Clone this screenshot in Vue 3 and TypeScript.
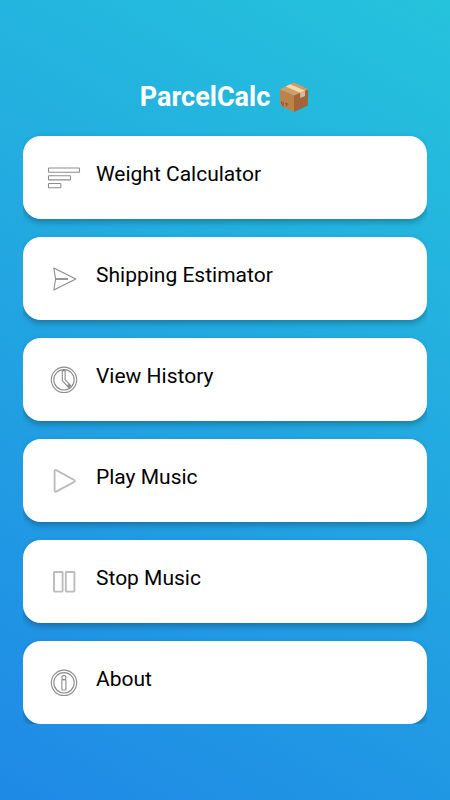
<script setup lang="ts">
type IconName = 'bars' | 'send' | 'clock' | 'play' | 'pause' | 'info'

interface MenuItem {
  label: string
  icon: IconName
}

const items: MenuItem[] = [
  { label: 'Weight Calculator', icon: 'bars' },
  { label: 'Shipping Estimator', icon: 'send' },
  { label: 'View History', icon: 'clock' },
  { label: 'Play Music', icon: 'play' },
  { label: 'Stop Music', icon: 'pause' },
  { label: 'About', icon: 'info' },
]
</script>

<template>
  <main class="screen">
    <h1 class="title">
      <span>ParcelCalc</span>
      <svg class="parcel" viewBox="0 0 32 32" aria-hidden="true">
        <path d="M1.8 8.2 16 14.4V31L2.2 24.4Z" fill="#bd8248" />
        <path d="M30.2 8.2 16 14.4V31l13.8-6.6Z" fill="#a0663a" />
        <path d="M16 1.4 30.2 8.2 16 14.4 1.8 8.2Z" fill="#d29d62" />
        <path d="M12 3.3 7.6 5.4l14.6 6.3 4.8-2Z" fill="#f7d9b0" />
        <path d="m22.2 11.7 4.8-2v5.2l-4.8 2Z" fill="#dbb996" />
        <path d="M3.6 20.4v2.4l1.8.9v-2.4M7 21.8l3.2 1.5M8.6 22.8v2.6M4 24.4l1.6.8" fill="none" stroke="#7a5230" stroke-width=".9" />
      </svg>
    </h1>
    <nav class="menu">
      <button v-for="item in items" :key="item.label" type="button" class="card">
        <svg class="icon" viewBox="0 0 36 36" aria-hidden="true">
          <g v-if="item.icon === 'bars'">
            <rect x="2.5" y="8" width="31" height="4.2" rx=".5" />
            <rect x="2.5" y="15.7" width="22" height="4.2" rx=".5" />
            <rect x="2.5" y="23.5" width="12.3" height="4.2" rx=".5" />
          </g>
          <g v-else-if="item.icon === 'send'">
            <path d="M7.8 7 29.8 18 7.8 29 9.6 18Z" />
            <path d="M9.6 18H22" class="thick" />
          </g>
          <g v-else-if="item.icon === 'clock'">
            <circle cx="18" cy="17.8" r="12.7" />
            <circle cx="18" cy="17.8" r="10.2" />
            <path d="M16.3 8.6h2.8v9l5.6 6-2 2.1-6.4-7.1Z" />
            <path d="m22 25 2.4-2.2M21.2 24l2.2-2" />
          </g>
          <g v-else-if="item.icon === 'play'" class="soft">
            <path d="M8.6 8v19.8c0 .9.8 1.3 1.6.8l18-9.8c.8-.5.8-1.3 0-1.8l-18-9.8c-.8-.5-1.6-.1-1.6.8Z" />
          </g>
          <g v-else-if="item.icon === 'pause'" class="soft">
            <rect x="8" y="8" width="8.6" height="19.6" rx=".5" />
            <rect x="19.8" y="8" width="8.6" height="19.6" rx=".5" />
          </g>
          <g v-else>
            <circle cx="18" cy="17.8" r="12.7" />
            <circle cx="18" cy="17.8" r="10.2" />
            <rect x="15.9" y="14.6" width="4" height="10.4" rx=".5" />
            <rect x="15.9" y="10.6" width="4" height="4" rx="1.6" />
          </g>
        </svg>
        <span class="label">{{ item.label }}</span>
      </button>
    </nav>
  </main>
</template>

<style>
body {
  margin: 0;
}
</style>

<style scoped>
.screen {
  box-sizing: border-box;
  min-height: 100vh;
  padding: 81px 23px 76px;
  background: linear-gradient(30deg, #1f89e6, #25c3dc);
  font-family: Roboto, "Liberation Sans", sans-serif;
}

.title {
  display: flex;
  align-items: center;
  justify-content: center;
  gap: 8px;
  margin: 0;
  color: #fff;
  font-size: 27px;
  font-weight: 700;
  line-height: 32px;
}

.parcel {
  width: 32px;
  height: 32px;
}

.menu {
  display: flex;
  flex-direction: column;
  gap: 18px;
  padding-top: 23px;
  overflow: hidden;
}

.card {
  display: flex;
  align-items: center;
  gap: 14px;
  width: 100%;
  height: 83px;
  padding: 0 23px;
  border: 0;
  border-radius: 18px;
  background: #fff;
  box-shadow: 0 3px 6px rgba(0, 0, 0, 0.28);
  color: #000;
  font-family: inherit;
  text-align: left;
  cursor: pointer;
}

.icon {
  flex: none;
  width: 36px;
  height: 36px;
  fill: none;
  stroke: #8c8c8c;
  stroke-width: 1.1;
  stroke-linejoin: round;
}

.thick {
  stroke-width: 1.8;
}

.soft {
  stroke: #bcbcbc;
  stroke-width: 1.9;
}

.label {
  padding-bottom: 8px;
  font-size: 21px;
  line-height: 24px;
}
</style>
